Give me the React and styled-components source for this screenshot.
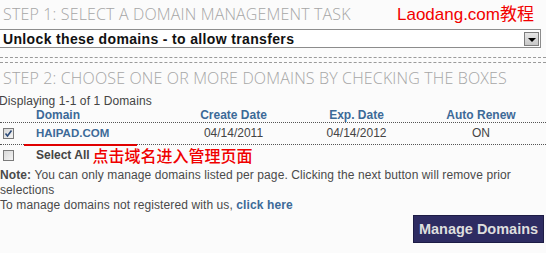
import React from "react";
import styled, { createGlobalStyle } from "styled-components";

const GlobalStyle = createGlobalStyle`
  html, body {
    margin: 0;
    padding: 0;
    background: #fbfbfb;
  }
  body {
    font-family: "Liberation Sans", Arial, sans-serif;
    font-size: 12px;
    color: #444;
  }
`;

const Page = styled.div`
  width: 546px;
  height: 253px;
  overflow: hidden;
  background: #fbfbfb;
`;

const StepRow = styled.div`
  display: flex;
  justify-content: space-between;
  align-items: baseline;
  height: 29px;
  padding-right: 12px;
`;

const StepTitle = styled.h2`
  margin: 0;
  padding-left: 3px;
  font-family: "Open Sans", "Lato", sans-serif;
  font-weight: 300;
  font-size: 16px;
  letter-spacing: 0.15px;
  line-height: ${({ $lh = 29 }) => $lh}px;
  color: #a6a6a6;
  white-space: nowrap;
`;

const Watermark = styled.span`
  font-family: "Liberation Sans", "Noto Sans CJK SC", sans-serif;
  font-size: 17px;
  line-height: 29px;
  color: #f20000;
`;

const SelectBox = styled.div`
  box-sizing: border-box;
  display: flex;
  align-items: center;
  justify-content: space-between;
  width: 541px;
  height: 19px;
  border-top: 1px solid #8c8c8c;
  border-bottom: 1px solid #8c8c8c;
  border-right: 1px solid #8c8c8c;
  padding-left: 3px;
  background: #fff;
  font-weight: 700;
  font-size: 14px;
  letter-spacing: 0.35px;
  color: #111;
`;

const SelectArrow = styled.span`
  box-sizing: border-box;
  width: 15px;
  height: 14px;
  margin-right: 1px;
  display: flex;
  align-items: center;
  justify-content: center;
  border: 1px solid #7d7d7d;
  background: linear-gradient(#e6e6e6, #c8c8c8);

  &::after {
    content: "";
    border-left: 4px solid transparent;
    border-right: 4px solid transparent;
    border-top: 4px solid #000;
    margin-top: 2px;
  }
`;

const Divider = styled.div`
  box-sizing: border-box;
  height: 6px;
  margin-top: 9px;
  border-top: 1px dashed #9a9a9a;
  border-bottom: 1px dashed #9a9a9a;
`;

const Counter = styled.div`
  line-height: 14px;
  margin-left: -1px;
  letter-spacing: 0.1px;
  color: #444;
`;

const Grid = styled.div`
  display: grid;
  grid-template-columns: 36px 134px 127px 119px 130px;
  align-items: center;
  height: ${({ $h }) => $h}px;
  border-bottom: ${({ $rule }) => ($rule ? "1px dotted #555" : "none")};
  line-height: ${({ $h }) => $h}px;
`;

const HeadCell = styled.div`
  font-weight: 700;
  color: #3d6a98;
  text-align: ${({ $left }) => ($left ? "left" : "center")};
  white-space: nowrap;
`;

const Cell = styled.div`
  color: #444;
  text-align: center;
  white-space: nowrap;
`;

const BoxCell = styled.div`
  display: flex;
  align-items: center;
  padding-left: 3px;
`;

const Check = styled.span`
  box-sizing: border-box;
  width: 11px;
  height: 11px;
  display: flex;
  align-items: center;
  justify-content: center;
  border: 1px solid #7a7a7a;
  background: linear-gradient(135deg, #d8d8d8, #f4f4f4);
`;

const DomainLink = styled.a`
  position: relative;
  font-weight: 700;
  font-size: 11.5px;
  color: #3d6a98;
  text-decoration: none;

  &::after {
    content: "";
    position: absolute;
    left: -12px;
    width: 113px;
    top: 17px;
    height: 2px;
    background: #e00000;
  }
`;

const SelectAllCell = styled.div`
  grid-column: 2 / span 4;
  display: flex;
  align-items: center;
  gap: 3px;
`;

const SelectAllLabel = styled.span`
  font-weight: 700;
  color: #444;
  line-height: 20px;
`;

const Callout = styled.span`
  font-family: "Noto Sans CJK SC", sans-serif;
  font-size: 16px;
  font-weight: 500;
  line-height: 20px;
  color: #f00000;
`;

const Note = styled.div`
  margin-top: 3px;
  line-height: 15px;
  letter-spacing: 0.1px;
  color: #4a4a4a;
`;

const NoteLine = styled.div`
  white-space: nowrap;
`;

const Bold = styled.b`
  color: ${({ $blue }) => ($blue ? "#3d6a98" : "#4a4a4a")};
`;

const Footer = styled.div`
  display: flex;
  justify-content: flex-end;
  padding-right: 2px;
  margin-top: 2px;
`;

const ManageButton = styled.button`
  box-sizing: border-box;
  width: 131px;
  height: 28px;
  padding: 0;
  border: 1px solid #1d1c45;
  background: #2e2c62;
  color: #dedede;
  font-family: "Liberation Sans", Arial, sans-serif;
  font-weight: 700;
  font-size: 14.5px;
`;

const CheckMark = () => (
  <svg width="9" height="9" viewBox="0 0 9 9">
    <path d="M1.5 4.5 L3.5 7 L7.5 1.5" fill="none" stroke="#2b4a78" strokeWidth="1.6" />
  </svg>
);

export default function App() {
  return (
    <Page>
      <GlobalStyle />
      <StepRow>
        <StepTitle>STEP 1: SELECT A DOMAIN MANAGEMENT TASK</StepTitle>
        <Watermark>Laodang.com教程</Watermark>
      </StepRow>
      <SelectBox>
        <span>Unlock these domains - to allow transfers</span>
        <SelectArrow />
      </SelectBox>
      <Divider />
      <StepTitle $lh={31}>STEP 2: CHOOSE ONE OR MORE DOMAINS BY CHECKING THE BOXES</StepTitle>
      <Counter>Displaying 1-1 of 1 Domains</Counter>
      <Grid $h={14} $rule>
        <div />
        <HeadCell $left>Domain</HeadCell>
        <HeadCell>Create Date</HeadCell>
        <HeadCell>Exp. Date</HeadCell>
        <HeadCell>Auto Renew</HeadCell>
      </Grid>
      <Grid $h={21} $rule>
        <BoxCell>
          <Check>
            <CheckMark />
          </Check>
        </BoxCell>
        <div>
          <DomainLink>HAIPAD.COM</DomainLink>
        </div>
        <Cell>04/14/2011</Cell>
        <Cell>04/14/2012</Cell>
        <Cell>ON</Cell>
      </Grid>
      <Grid $h={20}>
        <BoxCell>
          <Check />
        </BoxCell>
        <SelectAllCell>
          <SelectAllLabel>Select All</SelectAllLabel>
          <Callout>点击域名进入管理页面</Callout>
        </SelectAllCell>
      </Grid>
      <Note>
        <NoteLine>
          <Bold>Note:</Bold> You can only manage domains listed per page. Clicking the next button will remove prior
        </NoteLine>
        <NoteLine>selections</NoteLine>
        <NoteLine>
          To manage domains not registered with us, <Bold $blue>click here</Bold>
        </NoteLine>
      </Note>
      <Footer>
        <ManageButton>Manage Domains</ManageButton>
      </Footer>
    </Page>
  );
}
